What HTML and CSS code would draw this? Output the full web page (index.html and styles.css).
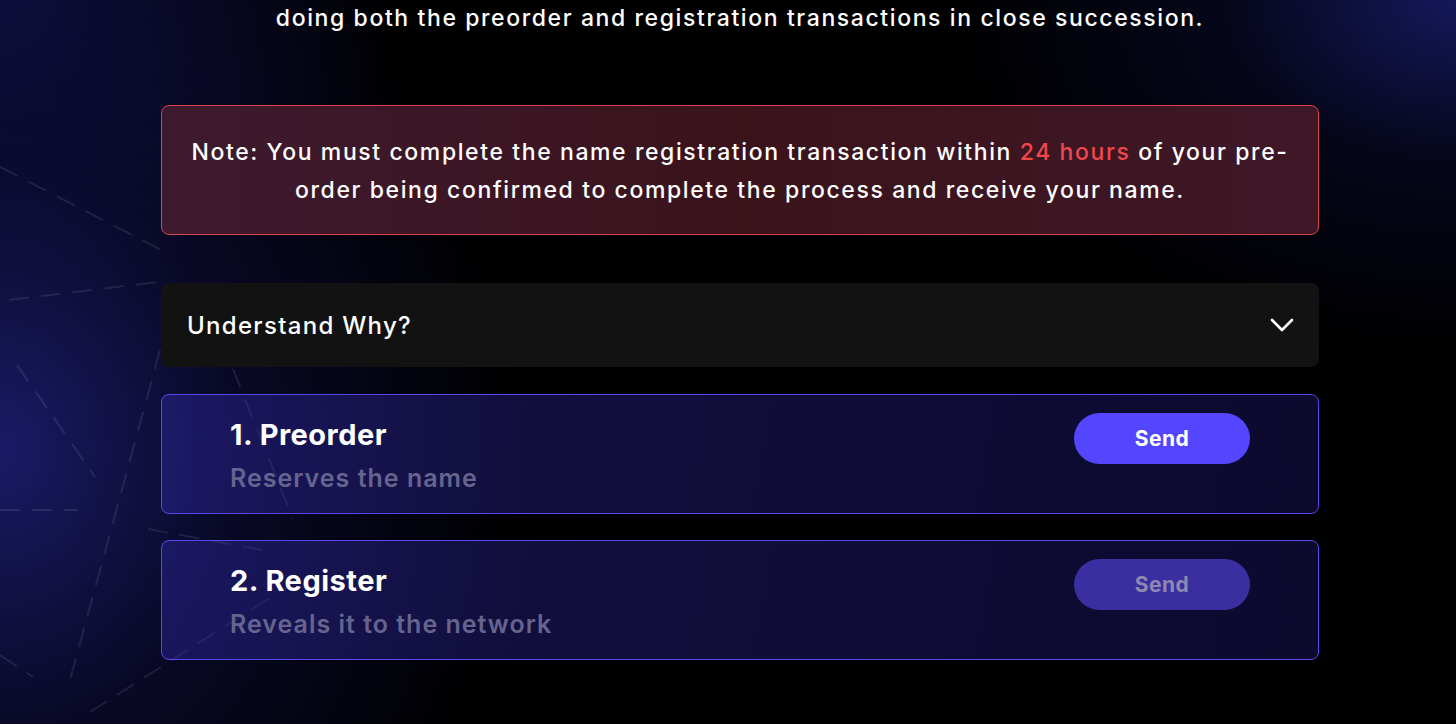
FILE: index.html
```html
<!DOCTYPE html>
<html lang="en">
<head>
    <meta charset="UTF-8">
    <meta name="viewport" content="width=device-width, initial-scale=1.0">
    <title>Register Name</title>
    <link rel="stylesheet" href="styles.css">
</head>
<body>
<!-- Decorative dashed lines behind the content -->
<svg class="bg-lines" width="1456" height="724" viewBox="0 0 1456 724">
    <g stroke="rgba(255,255,255,0.09)" stroke-width="2" stroke-dasharray="20 12" fill="none">
        <line x1="0" y1="167" x2="167" y2="253"/>
        <line x1="9" y1="300" x2="158" y2="282"/>
        <line x1="17" y1="365" x2="95" y2="477"/>
        <line x1="160" y1="350" x2="70" y2="680"/>
        <line x1="0" y1="510" x2="78" y2="510"/>
        <line x1="148" y1="529" x2="273" y2="552"/>
        <line x1="0" y1="655" x2="33" y2="677"/>
        <line x1="90" y1="712" x2="290" y2="585"/>
        <line x1="233" y1="369" x2="293" y2="519"/>
    </g>
</svg>

<main class="register">
    <p class="intro">doing both the preorder and registration transactions in close succession.</p>

    <div class="note">
        Note: You must complete the name registration transaction within <span class="hours">24 hours</span> of your pre-order being confirmed to complete the process and receive your name.
    </div>

    <div class="accordion">
        <span>Understand Why?</span>
        <svg class="chevron" width="24" height="14" viewBox="0 0 24 14">
            <path d="M2 2 L12 12 L22 2" stroke="#fff" stroke-width="2.6" fill="none" stroke-linecap="round" stroke-linejoin="round"/>
        </svg>
    </div>

    <div class="step">
        <div class="step-text">
            <h3>1. Preorder</h3>
            <p>Reserves the name</p>
        </div>
        <button type="button" class="send">Send</button>
    </div>

    <div class="step">
        <div class="step-text">
            <h3>2. Register</h3>
            <p>Reveals it to the network</p>
        </div>
        <button type="button" class="send" disabled>Send</button>
    </div>
</main>
</body>
</html>
```

FILE: styles.css
```css
/* Page background: black with blue glows */
body {
    margin: 0;
    height: 724px;
    overflow: hidden;
    font-family: Inter, "Liberation Sans", sans-serif;
    color: #fff;
    background:
        radial-gradient(ellipse 520px 620px at 0% 62%, #1a1a66 0%, rgba(16, 16, 70, 0.55) 45%, rgba(0, 0, 0, 0) 100%),
        radial-gradient(ellipse 520px 360px at 100% 0%, #15185a 0%, rgba(10, 12, 50, 0.5) 45%, rgba(0, 0, 0, 0) 100%),
        radial-gradient(ellipse 400px 300px at 0% 0%, #0c0c36 0%, rgba(0, 0, 0, 0) 100%),
        #000;
}

.bg-lines {
    position: absolute;
    top: 0;
    left: 0;
    pointer-events: none;
}

/* Main column */
.register {
    position: relative;
    width: 1158px;
    margin-left: 161px;
    display: flex;
    flex-direction: column;
}

.intro {
    margin: 0;
    padding-top: 3px;
    height: 33px;
    font-size: 23px;
    font-weight: 500;
    line-height: 30px;
    letter-spacing: 1.6px;
    text-align: center;
}

/* Red notice box */
.note {
    margin-top: 69px;
    height: 130px;
    box-sizing: border-box;
    padding: 27px 28px 0;
    text-align: center;
    font-size: 23px;
    font-weight: 500;
    line-height: 38px;
    letter-spacing: 1.6px;
    border: 1px solid #d8434b;
    border-radius: 8px;
    background: linear-gradient(90deg, #3e1a2f 0%, #3a131b 50%, #3f1828 100%);
}

.note .hours {
    color: #f0464c;
}

/* Collapsed accordion */
.accordion {
    margin-top: 48px;
    height: 84px;
    box-sizing: border-box;
    padding: 0 25px 0 26px;
    display: flex;
    align-items: center;
    justify-content: space-between;
    background-color: #121212;
    border-radius: 8px;
    font-size: 24px;
    font-weight: 500;
    letter-spacing: 1.3px;
}

/* Step cards */
.step {
    margin-top: 27px;
    height: 120px;
    box-sizing: border-box;
    padding: 18px 68px 0 68px;
    display: flex;
    justify-content: space-between;
    align-items: flex-start;
    border: 1px solid #5846f0;
    border-radius: 8px;
    background: linear-gradient(100deg, rgba(52, 44, 180, 0.38) 0%, rgba(40, 32, 150, 0.3) 100%);
}

.step + .step {
    margin-top: 26px;
}

.step-text h3 {
    margin: 0;
    padding-top: 1px;
    font-size: 29px;
    font-weight: 700;
    line-height: 42px;
    letter-spacing: 0.5px;
}

.step-text p {
    margin: 0;
    font-size: 25px;
    font-weight: 600;
    line-height: 44px;
    letter-spacing: 1px;
    color: #66648e;
}

.send {
    width: 176px;
    height: 51px;
    border: none;
    border-radius: 26px;
    background-color: #5446ff;
    color: #fff;
    font-family: inherit;
    font-size: 21px;
    font-weight: 700;
    letter-spacing: 0.5px;
    cursor: pointer;
}

.send:disabled {
    background-color: #3a2ea0;
    color: #8d88b0;
    cursor: default;
}
```
